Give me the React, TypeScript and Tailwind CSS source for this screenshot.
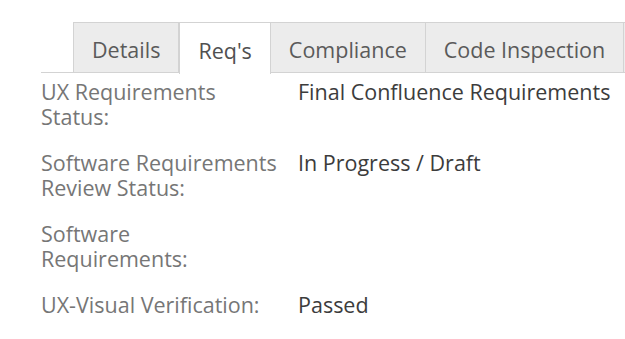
const tabs = [
  { label: 'Details', active: false },
  { label: "Req's", active: true },
  { label: 'Compliance', active: false },
  { label: 'Code Inspection', active: false },
];

const fields = [
  { label: 'UX Requirements Status:', value: 'Final Confluence Requirements', labelWidth: 'w-[200px]' },
  { label: 'Software Requirements Review Status:', value: 'In Progress / Draft', labelWidth: 'w-[250px]' },
  { label: 'Software Requirements:', value: '', labelWidth: 'w-[200px]' },
  { label: 'UX-Visual Verification:', value: 'Passed', labelWidth: 'w-[250px]' },
];

export default function App() {
  return (
    <div className="h-[339px] w-[625px] overflow-hidden bg-white font-['Open_Sans',sans-serif] text-[21.5px] leading-[25px]">
      <div className="pl-[41px] pt-[22px]">
        <div className="flex h-[51px] border-b border-[#d3d3d3] pl-[32px]">
          {tabs.map((tab) => (
            <div
              key={tab.label}
              className={
                tab.active
                  ? '-mb-px flex h-[52px] shrink-0 items-center border-x border-t border-[#d3d3d3] bg-white px-[18px] pt-[3px] text-[#505050]'
                  : '-ml-px flex shrink-0 items-center border border-b-0 border-[#d3d3d3] bg-[#ececec] px-[18px] pt-[3px] text-[#5a5a5a] first:ml-0'
              }
            >
              {tab.label}
            </div>
          ))}
          <div className="-ml-px w-[20px] shrink-0 border border-b-0 border-[#d3d3d3] bg-[#ececec]" />
        </div>
        <div className="mt-[6px] flex flex-col gap-[21px]">
          {fields.map((field) => (
            <div key={field.label} className="flex">
              <div className="w-[257px] shrink-0">
                <div className={`${field.labelWidth} text-[#767676]`}>{field.label}</div>
              </div>
              <div className="text-[#3c3c3c]">{field.value}</div>
            </div>
          ))}
        </div>
      </div>
    </div>
  );
}
